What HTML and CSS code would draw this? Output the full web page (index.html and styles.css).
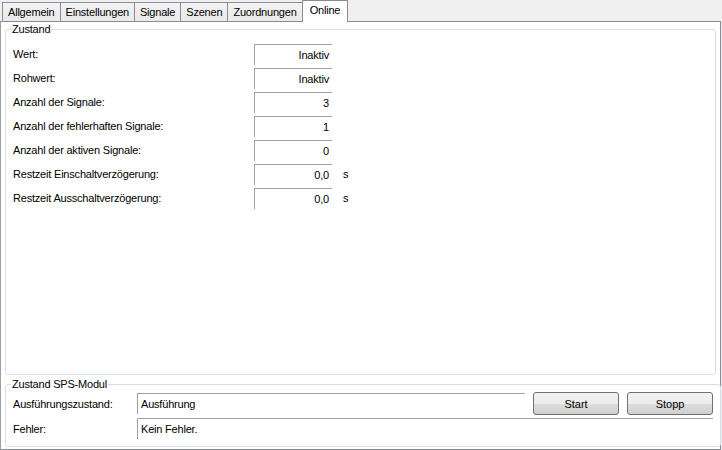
FILE: index.html
```html
<!DOCTYPE html>
<html lang="de">
<head>
    <meta charset="UTF-8">
    <title>Online</title>
    <link rel="stylesheet" href="styles.css">
</head>
<body>
    <div class="tabs">
        <div class="tab">Allgemein</div>
        <div class="tab">Einstellungen</div>
        <div class="tab">Signale</div>
        <div class="tab">Szenen</div>
        <div class="tab">Zuordnungen</div>
        <div class="tab active">Online</div>
    </div>
    <div class="panel">
        <fieldset class="group main">
            <legend>Zustand</legend>
            <div class="row"><span class="label">Wert:</span><span class="field">Inaktiv</span></div>
            <div class="row"><span class="label">Rohwert:</span><span class="field">Inaktiv</span></div>
            <div class="row"><span class="label">Anzahl der Signale:</span><span class="field">3</span></div>
            <div class="row"><span class="label">Anzahl der fehlerhaften Signale:</span><span class="field">1</span></div>
            <div class="row"><span class="label">Anzahl der aktiven Signale:</span><span class="field">0</span></div>
            <div class="row"><span class="label">Restzeit Einschaltverzögerung:</span><span class="field">0,0</span><span class="unit">s</span></div>
            <div class="row"><span class="label">Restzeit Ausschaltverzögerung:</span><span class="field">0,0</span><span class="unit">s</span></div>
        </fieldset>
        <fieldset class="group sps">
            <legend>Zustand SPS-Modul</legend>
            <div class="sps-row">
                <span class="sps-label">Ausführungszustand:</span>
                <span class="box short">Ausführung</span>
                <button class="btn">Start</button>
                <button class="btn">Stopp</button>
            </div>
            <div class="sps-row">
                <span class="sps-label">Fehler:</span>
                <span class="box">Kein Fehler.</span>
            </div>
        </fieldset>
    </div>
</body>
</html>
```

FILE: styles.css
```css
body {
    margin: 0;
    width: 722px;
    height: 450px;
    background: #f0f0f0;
    font-family: 'Liberation Sans', Arial, sans-serif;
    font-size: 11px;
    letter-spacing: -0.2px;
    color: #000;
    overflow: hidden;
}
.tabs {
    display: flex;
    align-items: flex-end;
    height: 21px;
    padding-left: 2px;
    position: relative;
    z-index: 1;
}
.tab {
    height: 18px;
    line-height: 19px;
    padding: 0 5px;
    border: 1px solid #898c95;
    border-bottom: none;
    border-left: none;
    background: linear-gradient(#f3f3f3, #e9e9e9);
}
.tab:first-child {
    border-left: 1px solid #898c95;
}
.tab.active {
    height: 21px;
    line-height: 19px;
    padding: 0 7px;
    margin-bottom: -1px;
    margin-left: -1px;
    border-left: 1px solid #898c95;
    background: #fff;
}
.panel {
    box-sizing: border-box;
    width: 721px;
    height: 429px;
    padding: 1px 4px 2px 4px;
    background: #fff;
    border: 1px solid #898c95;
    border-left-color: #a0a0a0;
    display: flex;
    flex-direction: column;
}
.group {
    margin: 0;
    padding: 0 7px;
    border: 1px solid #d5dfe5;
    border-radius: 3px;
}
.group legend {
    padding: 0 1px;
    margin-left: -2px;
    line-height: 13px;
}
.main {
    flex: 1;
    padding-top: 6px;
}
.row {
    display: flex;
    align-items: center;
    height: 24px;
}
.label {
    width: 241px;
}
.field {
    width: 74px;
    height: 20px;
    line-height: 20px;
    padding-right: 3px;
    text-align: right;
    border-top: 1px solid #a0a0a0;
    border-left: 1px solid #a0a0a0;
}
.unit {
    margin-left: 11px;
}
.sps {
    box-sizing: border-box;
    flex: none;
    height: 68px;
    margin-top: 4px;
    padding-top: 1px;
}
.sps legend {
    line-height: 11px;
}
.sps-row {
    display: flex;
    align-items: center;
    height: 25px;
}
.sps-label {
    width: 124px;
}
.box {
    flex: 1;
    height: 20px;
    line-height: 20px;
    padding-left: 3px;
    border-top: 1px solid #a0a0a0;
    border-left: 1px solid #a0a0a0;
}
.box.short {
    flex: none;
    width: 384px;
}
.btn {
    width: 86px;
    height: 23px;
    margin-left: 8px;
    padding: 0;
    font: inherit;
    color: #000;
    border: 1px solid #707070;
    border-radius: 3px;
    background: linear-gradient(#f2f2f2 0%, #ebebeb 50%, #dddddd 51%, #cfcfcf 100%);
}
```
